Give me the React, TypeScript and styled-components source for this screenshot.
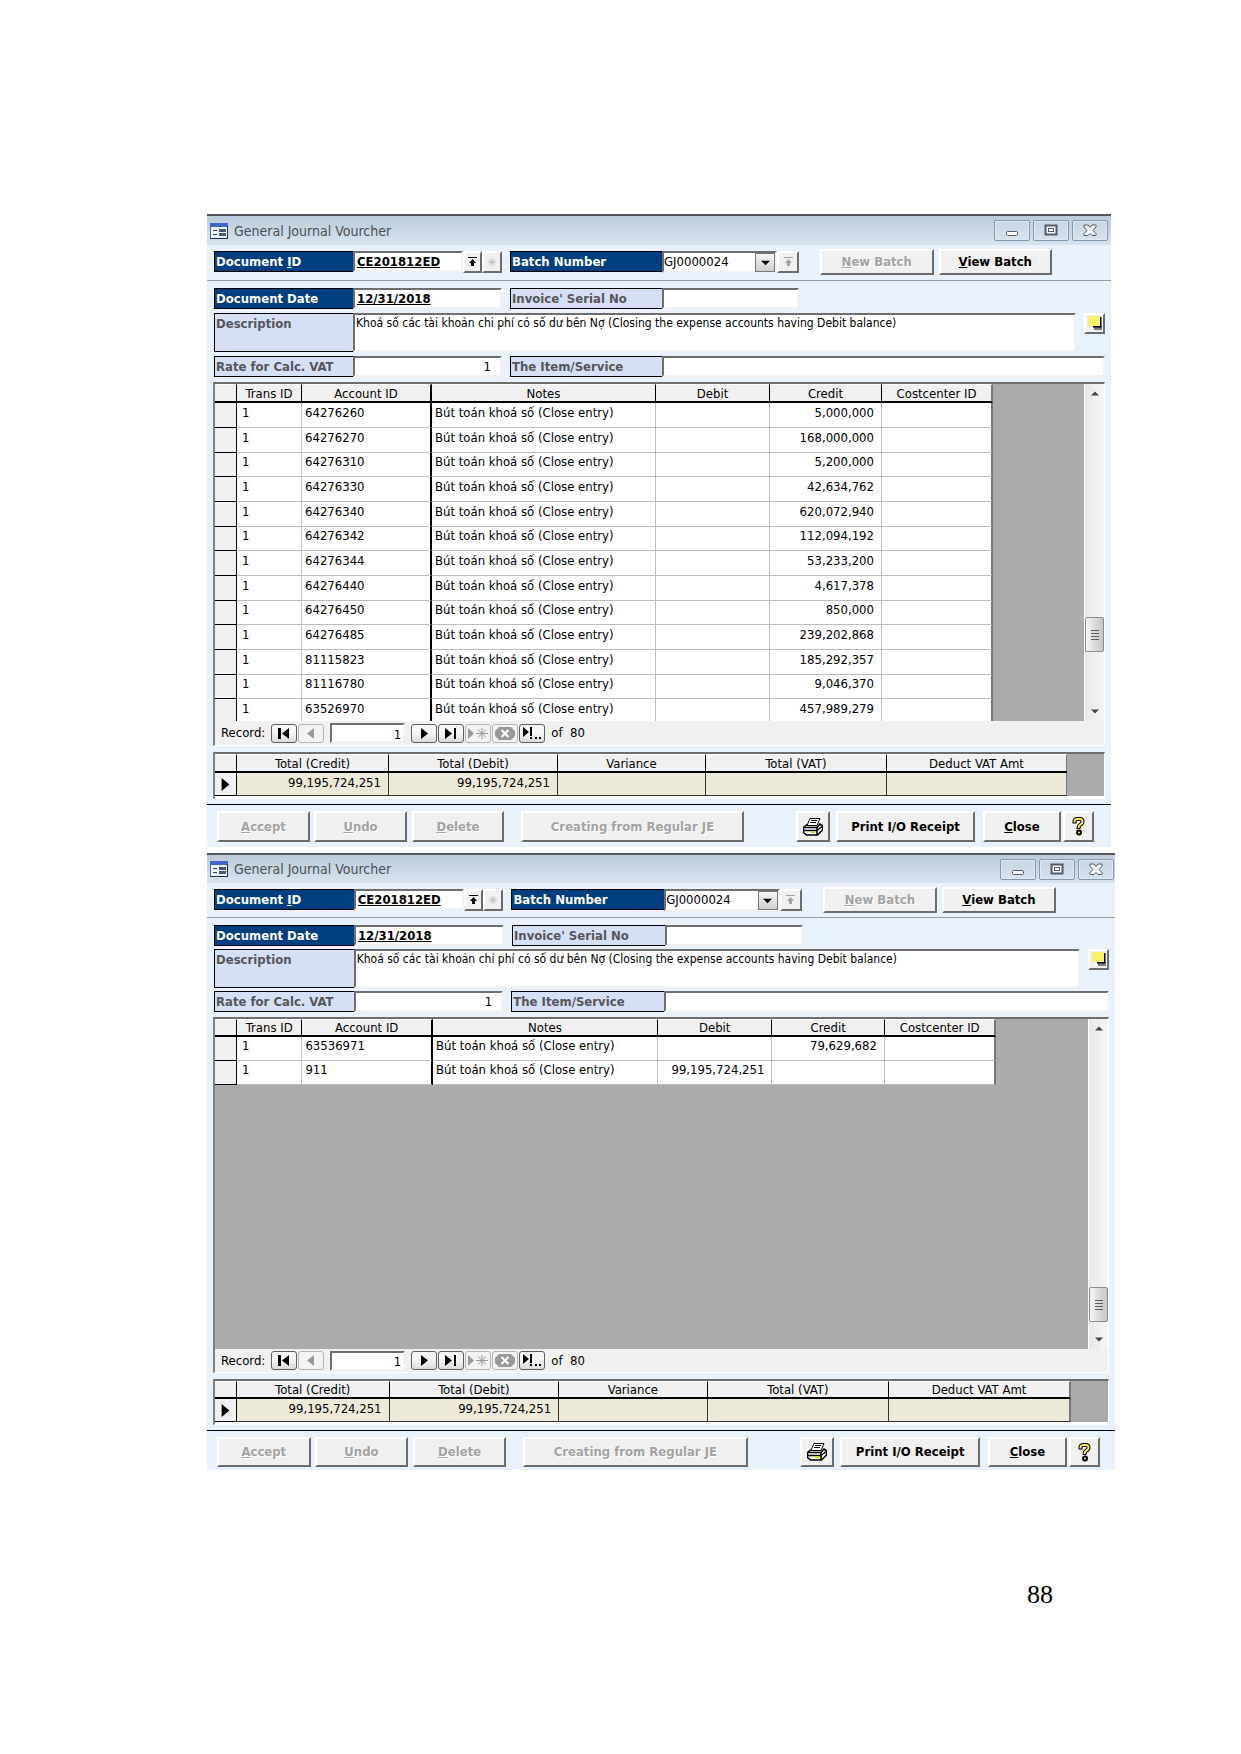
import React, { useId } from 'react';
import styled, { createGlobalStyle, css } from 'styled-components';

const GlobalStyle = createGlobalStyle`
  *, *::before, *::after { box-sizing: border-box; }
  body {
    margin: 0;
    background: #fff;
    color: #000;
    font: 13px/16px "DejaVu Sans Condensed", "DejaVu Sans", sans-serif;
  }
  input, select, button, textarea { font: inherit; color: inherit; margin: 0; border-radius: 0; }
`;

/* ---------- page ---------- */

const Page = styled.main`
  display: flex;
  flex-direction: column;
  min-height: 1754px;
  padding: 214px 126px 0 207px;
`;

const PageNumber = styled.footer`
  align-self: flex-end;
  margin: 104px 62px 0 0;
  font: 26px/30px "Liberation Serif", serif;
`;

/* ---------- window frame ---------- */

const Frame = styled.section<{ $inset: number; $dense: boolean }>`
  --head-height: ${p => (p.$dense ? 18 : 19)}px;
  --row-height: ${p => (p.$dense ? 24 : 25)}px;
  --nav-height: ${p => (p.$dense ? 23 : 24)}px;
  --action-height: ${p => (p.$dense ? 30 : 31)}px;
  width: calc(100% - ${p => p.$inset}px);
  margin-bottom: 6px;
  background: #e9f1fd;
  border-top: 2px solid #54545c;
`;

const TitleBar = styled.header<{ $dense: boolean }>`
  display: flex;
  align-items: center;
  height: ${p => (p.$dense ? 28 : 29)}px;
  padding: 0 ${p => (p.$dense ? 1 : 3)}px 0 3px;
  background: linear-gradient(#bccbd9, #d7e4f0);
`;

const Title = styled.h1`
  flex: 1;
  margin: 0 0 0 6px;
  font-size: 14px;
  font-weight: 400;
  color: #4a4f57;
`;

const Captions = styled.div`
  display: flex;
  gap: 3px;
`;

const CaptionButton = styled.button`
  display: grid;
  place-items: center;
  width: 36px;
  height: 21px;
  padding: 0;
  border: 1px solid #8696ad;
  border-radius: 2px;
  background: linear-gradient(#c9d6e3, #d6e2ee);
  box-shadow: inset 0 0 0 1px #dfe9f3;
`;

/* ---------- form parts ---------- */

const tracks = (weights: number[]) => weights.map(w => `minmax(0, ${w}fr)`).join(' ');

const bevelUp = css`
  background: #f0f0f0;
  border: 2px solid;
  border-color: #fff #6c6c6c #6c6c6c #fff;
`;

const bevelDown = css`
  background: #fff;
  border: 2px solid;
  border-color: #6e6e6e #f2f2f2 #f2f2f2 #6e6e6e;
`;

const HeaderBand = styled.div<{ $dense: boolean }>`
  padding: 4px 59px ${p => (p.$dense ? 4 : 5)}px 7px;
  border-bottom: 1px solid #9a9a9a;
`;

const Details = styled.div<{ $dense: boolean }>`
  display: flex;
  flex-direction: column;
  gap: ${p => (p.$dense ? 3 : 4)}px;
  padding: 7px 6px 5px 7px;
`;

const Line = styled.div<{ $end?: number }>`
  display: flex;
  gap: 8px;
  align-items: center;
  padding-right: ${p => p.$end ?? 0}px;
`;

const Group = styled.div<{ $w: number; $cols: number[]; $gap?: number }>`
  display: grid;
  grid-template-columns: ${p => tracks(p.$cols)};
  flex: ${p => p.$w} 1 0;
  min-width: 0;
  gap: ${p => p.$gap ?? 0}px;
`;

const Label = styled.label<{ $strong?: boolean }>`
  height: 21px;
  padding: 1px;
  border: 1px solid #000;
  border-right-width: 0;
  line-height: 17px;
  font-weight: 700;
  white-space: nowrap;
  color: ${p => (p.$strong ? '#fff' : '#55555b')};
  background: ${p => (p.$strong ? '#003f7f' : '#d6e0f5')};
`;

const TallLabel = styled(Label)`
  height: 39px;
`;

const Field = styled.input<{ $key?: boolean; $right?: boolean }>`
  ${bevelDown}
  width: 100%;
  height: 21px;
  padding: 0 9px 0 2px;
  line-height: 17px;
  text-align: ${p => (p.$right ? 'right' : 'left')};
  ${p => p.$key && css`
    font-weight: 700;
    text-decoration: underline;
  `}
`;

const Memo = styled.textarea`
  ${bevelDown}
  width: 100%;
  height: 39px;
  padding: 0 1px;
  font-size: 12px;
  line-height: 17px;
  resize: none;
  overflow: hidden;
`;

const Combo = styled.div`
  ${bevelDown}
  position: relative;
  height: 22px;
`;

const ComboSelect = styled.select`
  appearance: none;
  display: block;
  width: 100%;
  height: 17px;
  padding: 0 20px 0 0;
  border: 0;
  outline: 0;
  background: transparent;
`;

const ComboArrow = styled.span`
  position: absolute;
  top: 0;
  right: 0;
  display: grid;
  place-items: center;
  width: 20px;
  height: 19px;
  border: 1px solid #777;
  background: linear-gradient(#f7f7f7, #cfcfcf);
  pointer-events: none;
`;

const PushButton = styled.button<{ $h?: string }>`
  ${bevelUp}
  display: grid;
  place-items: center;
  width: 100%;
  height: ${p => p.$h ?? 'var(--action-height)'};
  padding: 0;
  font-weight: 700;
  white-space: nowrap;
  &:disabled { color: #a3a3a3; text-shadow: 1px 1px 0 #fff; }
`;

const NoteButton = styled(PushButton)`
  flex: 0 0 21px;
  width: 21px;
  align-self: flex-start;
`;

/* ---------- grids ---------- */

const Sheet = styled.div`
  margin: 0 6px;
  border: 1px solid #fff;
  border-top: 2px solid #6e6e6e;
  border-left: 2px solid #808080;
  background: #f0f0f0;
`;

const Viewport = styled.div<{ $h: number }>`
  display: flex;
  height: ${p => p.$h}px;
  overflow: hidden;
  background: #ababab;
`;

const TableArea = styled.div<{ $w: number }>`
  flex: ${p => p.$w} 1 0;
  min-width: 0;
`;

const Blank = styled.div<{ $w: number }>`
  flex: ${p => p.$w} 1 0;
  background: #ababab;
`;

const Table = styled.table`
  width: 100%;
  table-layout: fixed;
  border-collapse: separate;
  border-spacing: 0;
  th, td { padding: 0; overflow: hidden; white-space: nowrap; }
  tr > :last-child { border-right: 2px solid #777; }
`;

const HeadCell = styled.th<{ $heavy?: boolean }>`
  height: var(--head-height);
  font-weight: 400;
  line-height: 15px;
  background: #f0f0f0;
  border-top: 1px solid #fff;
  border-right: ${p => (p.$heavy ? 2 : 1)}px solid #000;
  border-bottom: 2px solid #000;
`;

const EntryRow = styled.tr`
  td { height: var(--row-height); background: #fff; border-right: 1px solid #bdbdbd; border-bottom: 1px solid #bdbdbd; }
  &:nth-child(3n) td { height: 24px; }
`;

const Cell = styled.td<{ $right?: boolean; $heavy?: boolean }>`
  && {
    padding: 0 7px 5px 3px;
    text-align: ${p => (p.$right ? 'right' : 'left')};
    ${p => p.$heavy && css`border-right: 2px solid #000;`}
  }
`;

const IdCell = styled(Cell)`
  && { padding-left: 5px; }
`;

const Selector = styled.td`
  && {
    background: #f0f0f0;
    border-right: 1px solid #000;
    border-bottom: 1px solid #000;
    text-align: center;
    line-height: 0;
  }
`;

const TotalRow = styled.tr`
  td { height: 23px; background: #ece9d8; border-right: 1px solid #333; border-bottom: 1px solid #333; }
`;

const TotalCell = styled.td`
  && { padding: 0 7px 2px 3px; text-align: right; }
`;

const Scrollbar = styled.div`
  display: flex;
  flex-direction: column;
  flex: 0 0 20px;
  border-left: 1px solid #fff;
  background: linear-gradient(90deg, #e8e8e8, #f6f6f6);
`;

const ScrollButton = styled.button`
  display: grid;
  place-items: center;
  height: 20px;
  padding: 0;
  border: 0;
  background: transparent;
`;

const Track = styled.div<{ $w: number }>`
  flex: ${p => p.$w} 1 0;
`;

const Thumb = styled.div`
  display: grid;
  place-items: center;
  height: 35px;
  border: 1px solid #8b8b8b;
  border-radius: 2px;
  background: linear-gradient(90deg, #f6f6f6, #dcdcdc 50%, #c6c6c6);
`;

const Navigator = styled.div`
  display: flex;
  align-items: center;
  height: var(--nav-height);
  padding-left: 6px;
`;

const NavButtons = styled.div`
  display: flex;
  gap: 1px;
  margin: 0 6px;
`;

const NavButton = styled.button`
  display: grid;
  place-items: center;
  width: 26px;
  height: 19px;
  padding: 0;
  border: 1px solid #5f5f5f;
  border-radius: 3px;
  background: linear-gradient(#f6f6f6 45%, #dadada);
  &:disabled { border-color: #b5b5b5; background: #f3f3f3; }
`;

const PositionField = styled.input`
  ${bevelDown}
  width: 75px;
  height: 20px;
  padding: 2px 2px 0 0;
  text-align: right;
`;

const Totals = styled.div`
  padding: 6px 0 5px;
`;

const TotalsBody = styled.div`
  display: flex;
  padding-bottom: 2px;
  background: #fff;
`;

const ActionBar = styled.footer<{ $dense: boolean }>`
  display: grid;
  grid-template-columns: ${tracks([93, 4, 93, 5, 92, 17, 223, 52, 34, 6, 139, 8, 78, 2, 31])};
  padding: 6px ${p => (p.$dense ? 15 : 17)}px ${p => (p.$dense ? 3 : 5)}px 10px;
  border-top: 1px solid #000;
  > button:nth-child(2) { grid-column: 3; }
  > button:nth-child(3) { grid-column: 5; }
  > button:nth-child(4) { grid-column: 7; }
  > button:nth-child(5) { grid-column: 9; }
  > button:nth-child(6) { grid-column: 11; }
  > button:nth-child(7) { grid-column: 13; }
  > button:nth-child(8) { grid-column: 15; }
`;

const Gap = styled.span<{ $w: number }>`
  flex: ${p => p.$w} 1 0;
`;

/* ---------- drawings ---------- */

const FormIcon = () => (
  <svg width="18" height="16" viewBox="0 0 18 16" aria-hidden="true">
    <rect width="18" height="16" fill="#3f68c8" />
    <rect x="1" y="4" width="16" height="11" fill="#eef3fc" />
    <path d="M3 7.500h4M3 11.500h4" stroke="#33415f" />
    <path d="M9 6h7v3H9zM9 10h7v3H9z" fill="#4a5878" />
    <path d="M0 15.500h18M17.500 3v13" stroke="#1d2f66" />
  </svg>
);

const MinimizeIcon = () => (
  <svg width="14" height="13" viewBox="0 0 14 13" aria-hidden="true">
    <rect x="1.500" y="7.500" width="11" height="4" rx="1" fill="#fff" stroke="#555b66" />
  </svg>
);

const RestoreIcon = () => (
  <svg width="14" height="13" viewBox="0 0 14 13" aria-hidden="true">
    <rect x="1.500" y="1.500" width="11" height="9" fill="#f4f6fa" stroke="#555b66" strokeWidth="2" />
    <rect x="4.500" y="4.500" width="5" height="3" fill="#fff" stroke="#555b66" />
  </svg>
);

const CloseIcon = () => (
  <svg width="14" height="13" viewBox="0 0 14 13" aria-hidden="true">
    <path d="M1 1h4l2 2.500L9 1h4v2L10 6.500l3 3v2H9L7 9.500l-2 2H1v-2l3-3L1 3z" fill="#f6f8fb" stroke="#555b66" />
  </svg>
);

const FindIcon = ({ color = '#000' }: { color?: string }) => (
  <svg width="9" height="10" viewBox="0 0 9 10" aria-hidden="true">
    <path d="M0 0h9v1H0zM4.500 2L8 6H6v3H3V6H1z" fill={color} />
  </svg>
);

const StarIcon = () => (
  <svg width="8" height="8" viewBox="0 0 10 10" aria-hidden="true">
    <path d="M5 0v10M0 5h10M1.500 1.500l7 7M8.500 1.500l-7 7" stroke="#b4b4b4" />
  </svg>
);

const NoteIcon = () => (
  <svg width="14" height="15" viewBox="0 0 14 15" aria-hidden="true">
    <path d="M6 10h8v4H6z" fill="#7d7d7d" />
    <path d="M12.500 1v9.500H5" stroke="#000" strokeWidth="2" fill="none" />
    <rect width="12" height="10" fill="#f7f36a" />
  </svg>
);

const Triangle = ({ dir, color = '#000', size = 9 }: { dir: 'up' | 'down' | 'left' | 'right'; color?: string; size?: number }) => {
  const shapes = { up: 'M0 7h10L5 2z', down: 'M0 3h10L5 8z', left: 'M8 0v10L2 5z', right: 'M2 0v10l6-5z' };
  return (
    <svg width={size} height={size} viewBox="0 0 10 10" aria-hidden="true">
      <path d={shapes[dir]} fill={color} />
    </svg>
  );
};

const NavIcon = ({ kind }: { kind: string }) => (
  <svg width="22" height="13" viewBox="0 0 22 13" aria-hidden="true">
    {kind === 'first' && <path d="M5 1h3v11H5zM16 1v11L9 6.500z" fill="#000" />}
    {kind === 'prev' && <path d="M14 1v11L7 6.500z" fill="#999" />}
    {kind === 'next' && <path d="M8 1v11l7-5.500z" fill="#000" />}
    {kind === 'last' && <path d="M5 1v11l7-5.500zM14 1h2v11h-2z" fill="#000" />}
    {kind === 'new' && (
      <>
        <path d="M1 1v11l6-5.500z" fill="#999" />
        <path d="M15 1v11M9 6.500h12M11 2.500l8 8M19 2.500l-8 8" stroke="#999" />
      </>
    )}
    {kind === 'delete' && (
      <>
        <path d="M5 0h12l4 4v5l-4 4H5L1 9V4z" fill="#999" />
        <path d="M7.500 3l7 7M14.500 3l-7 7" stroke="#fff" strokeWidth="2" />
      </>
    )}
    {kind === 'all' && <path d="M2 0v10l6-5zM9 0h2v9H9zM9 10h2v2H9zM14 10h2v2h-2zM18 10h2v2h-2z" fill="#000" />}
  </svg>
);

const PrinterIcon = () => (
  <svg width="20" height="18" viewBox="0 0 20 18" aria-hidden="true">
    <path d="M7 .5h10l-3 7H4z" fill="#fff" stroke="#000" />
    <path d="M8 2.500h6M7 4.500h6" stroke="#000" />
    <path d="M4 6.500L.5 9.500v5l3 2.500h11l5-5V7.500L17 6l-3 3.500H1" fill="#fff" stroke="#000" strokeWidth="1.500" />
    <path d="M1 12.500h13l5-4M14 9.500V17" stroke="#000" fill="none" strokeWidth="1.500" />
    <path d="M8 14h4" stroke="#d8d800" strokeWidth="2" />
  </svg>
);

const HelpIcon = () => (
  <svg width="13" height="19" viewBox="0 0 13 19" aria-hidden="true">
    <path d="M2.500 6.500V4Q3 2 5 2h3Q10.500 2 10.500 4.500 10.500 6.500 8.500 7.500 6.500 8.500 6.500 12" fill="none" stroke="#000" strokeWidth="4" />
    <circle cx="7" cy="15.500" r="3" fill="#000" />
    <path d="M2.500 5.500V4Q3 2 5 2h3Q10.500 2 10.500 4.500 10.500 6.500 8.500 7.500 6.500 8.500 6.500 11" fill="none" stroke="#f2e94e" strokeWidth="2" />
    <circle cx="7" cy="15.500" r="1" fill="#f2e94e" />
  </svg>
);

const GripIcon = () => (
  <svg width="8" height="11" viewBox="0 0 8 11" aria-hidden="true">
    <path d="M0 1.500h8M0 4.500h8M0 7.500h8M0 10.500h8" stroke="#5c5c5c" />
  </svg>
);

/* ---------- data ---------- */

type Entry = { account: string; debit?: string; credit?: string };

const NOTE = 'Bút toán khoá số (Close entry)';
const DESCRIPTION = 'Khoá số các tài khoản chi phí có số dư bên Nợ (Closing the expense accounts having Debit balance)';

const firstEntries: Entry[] = [
  { account: '64276260', credit: '5,000,000' },
  { account: '64276270', credit: '168,000,000' },
  { account: '64276310', credit: '5,200,000' },
  { account: '64276330', credit: '42,634,762' },
  { account: '64276340', credit: '620,072,940' },
  { account: '64276342', credit: '112,094,192' },
  { account: '64276344', credit: '53,233,200' },
  { account: '64276440', credit: '4,617,378' },
  { account: '64276450', credit: '850,000' },
  { account: '64276485', credit: '239,202,868' },
  { account: '81115823', credit: '185,292,357' },
  { account: '81116780', credit: '9,046,370' },
  { account: '63526970', credit: '457,989,279' },
];

const lastEntries: Entry[] = [
  { account: '63536971', credit: '79,629,682' },
  { account: '911', debit: '99,195,724,251' },
];

const entryColumns: [string, number][] = [
  ['', 22], ['Trans ID', 65], ['Account ID', 130], ['Notes', 224], ['Debit', 114], ['Credit', 112], ['Costcenter ID', 111],
];

const totalColumns: [string, number, string][] = [
  ['Total (Credit)', 152, '99,195,724,251'],
  ['Total (Debit)', 169, '99,195,724,251'],
  ['Variance', 148, ''],
  ['Total (VAT)', 181, ''],
  ['Deduct VAT Amt', 181, ''],
];

/* ---------- voucher window ---------- */

type VoucherProps = { entries: Entry[]; inset?: number; dense?: boolean; gridHeight: number; above: number; below: number };

function Voucher({ entries, inset = 0, dense = false, gridHeight, above, below }: VoucherProps) {
  const id = useId();
  return (
    <Frame $inset={inset} $dense={dense}>
      <TitleBar $dense={dense}>
        <FormIcon />
        <Title>General Journal Vourcher</Title>
        <Captions>
          <CaptionButton aria-label="Minimize"><MinimizeIcon /></CaptionButton>
          <CaptionButton aria-label="Restore"><RestoreIcon /></CaptionButton>
          <CaptionButton aria-label="Close window"><CloseIcon /></CaptionButton>
        </Captions>
      </TitleBar>

      <HeaderBand $dense={dense}>
        <Line>
          <Group $w={288} $cols={[139, 110, 19, 20]}>
            <Label $strong htmlFor={`${id}doc`}><span>Document <u>I</u>D</span></Label>
            <Field $key id={`${id}doc`} defaultValue="CE201812ED" />
            <PushButton $h="22px" aria-label="Find document"><FindIcon /></PushButton>
            <PushButton $h="22px" disabled aria-label="New document"><StarIcon /></PushButton>
          </Group>
          <Group $w={289} $cols={[152, 115, 22]}>
            <Label $strong htmlFor={`${id}batch`}>Batch Number</Label>
            <Combo>
              <ComboSelect id={`${id}batch`} defaultValue="GJ0000024"><option>GJ0000024</option></ComboSelect>
              <ComboArrow><Triangle dir="down" /></ComboArrow>
            </Combo>
            <PushButton $h="22px" disabled aria-label="Find batch"><FindIcon color="#a3a3a3" /></PushButton>
          </Group>
          <Gap $w={5} />
          <Group $w={232} $cols={[1, 1]} $gap={5}>
            <PushButton $h="26px" disabled><span><u>N</u>ew Batch</span></PushButton>
            <PushButton $h="26px"><span><u>V</u>iew Batch</span></PushButton>
          </Group>
        </Line>
      </HeaderBand>

      <Details $dense={dense}>
        <Line $end={306}>
          <Group $w={288} $cols={[139, 149]}>
            <Label $strong htmlFor={`${id}date`}>Document Date</Label>
            <Field $key id={`${id}date`} defaultValue="12/31/2018" />
          </Group>
          <Group $w={289} $cols={[152, 137]}>
            <Label htmlFor={`${id}serial`}>Invoice' Serial No</Label>
            <Field id={`${id}serial`} />
          </Group>
        </Line>
        <Line>
          <Group $w={866} $cols={[139, 723]}>
            <TallLabel htmlFor={`${id}desc`}>Description</TallLabel>
            <Memo id={`${id}desc`} defaultValue={DESCRIPTION} />
          </Group>
          <NoteButton $h="21px" aria-label="Notes"><NoteIcon /></NoteButton>
        </Line>
        <Line>
          <Group $w={288} $cols={[139, 149]}>
            <Label htmlFor={`${id}rate`}>Rate for Calc. VAT</Label>
            <Field $right id={`${id}rate`} defaultValue="1" />
          </Group>
          <Group $w={595} $cols={[152, 443]}>
            <Label htmlFor={`${id}item`}>The Item/Service</Label>
            <Field id={`${id}item`} />
          </Group>
        </Line>
      </Details>

      <Sheet>
        <Viewport $h={gridHeight}>
          <TableArea $w={777}>
            <Table>
              <colgroup>{entryColumns.map(([name, w]) => <col key={name} width={w} />)}</colgroup>
              <thead>
                <tr>{entryColumns.map(([name], i) => <HeadCell key={name} $heavy={i === 2}>{name}</HeadCell>)}</tr>
              </thead>
              <tbody>
                {entries.map(e => (
                  <EntryRow key={e.account}>
                    <Selector />
                    <IdCell>1</IdCell>
                    <Cell $heavy>{e.account}</Cell>
                    <Cell>{NOTE}</Cell>
                    <Cell $right>{e.debit}</Cell>
                    <Cell $right>{e.credit}</Cell>
                    <Cell />
                  </EntryRow>
                ))}
              </tbody>
            </Table>
          </TableArea>
          <Blank $w={91} />
          <Scrollbar>
            <ScrollButton aria-label="Scroll up"><Triangle dir="up" color="#444" size={8} /></ScrollButton>
            <Track $w={above} />
            <Thumb><GripIcon /></Thumb>
            <Track $w={below} />
            <ScrollButton aria-label="Scroll down"><Triangle dir="down" color="#444" size={8} /></ScrollButton>
          </Scrollbar>
        </Viewport>
        <Navigator>
          <label htmlFor={`${id}pos`}>Record:</label>
          <NavButtons>
            <NavButton aria-label="First"><NavIcon kind="first" /></NavButton>
            <NavButton aria-label="Previous" disabled><NavIcon kind="prev" /></NavButton>
          </NavButtons>
          <PositionField id={`${id}pos`} defaultValue="1" />
          <NavButtons>
            <NavButton aria-label="Next"><NavIcon kind="next" /></NavButton>
            <NavButton aria-label="Last"><NavIcon kind="last" /></NavButton>
            <NavButton aria-label="New" disabled><NavIcon kind="new" /></NavButton>
            <NavButton aria-label="Delete record" disabled><NavIcon kind="delete" /></NavButton>
            <NavButton aria-label="All"><NavIcon kind="all" /></NavButton>
          </NavButtons>
          <span>of&nbsp; 80</span>
        </Navigator>
      </Sheet>

      <Totals>
        <Sheet>
          <TotalsBody>
            <TableArea $w={852}>
              <Table>
                <colgroup>
                  <col width={22} />
                  {totalColumns.map(([name, w]) => <col key={name} width={w} />)}
                </colgroup>
                <thead>
                  <tr>
                    <HeadCell />
                    {totalColumns.map(([name]) => <HeadCell key={name}>{name}</HeadCell>)}
                  </tr>
                </thead>
                <tbody>
                  <TotalRow>
                    <Selector><Triangle dir="right" size={13} /></Selector>
                    {totalColumns.map(([name, , value]) => <TotalCell key={name}>{value}</TotalCell>)}
                  </TotalRow>
                </tbody>
              </Table>
            </TableArea>
            <Blank $w={37} />
          </TotalsBody>
        </Sheet>
      </Totals>

      <ActionBar $dense={dense}>
        <PushButton disabled><span><u>A</u>ccept</span></PushButton>
        <PushButton disabled><span><u>U</u>ndo</span></PushButton>
        <PushButton disabled><span><u>D</u>elete</span></PushButton>
        <PushButton disabled>Creating from Regular JE</PushButton>
        <PushButton aria-label="Print"><PrinterIcon /></PushButton>
        <PushButton>Print I/O Receipt</PushButton>
        <PushButton><span><u>C</u>lose</span></PushButton>
        <PushButton aria-label="Help"><HelpIcon /></PushButton>
      </ActionBar>
    </Frame>
  );
}

export default function App() {
  return (
    <>
      <GlobalStyle />
      <Page>
        <Voucher entries={firstEntries} inset={4} gridHeight={337} above={213} below={49} />
        <Voucher entries={lastEntries} dense gridHeight={330} above={249} below={7} />
        <PageNumber>88</PageNumber>
      </Page>
    </>
  );
}
